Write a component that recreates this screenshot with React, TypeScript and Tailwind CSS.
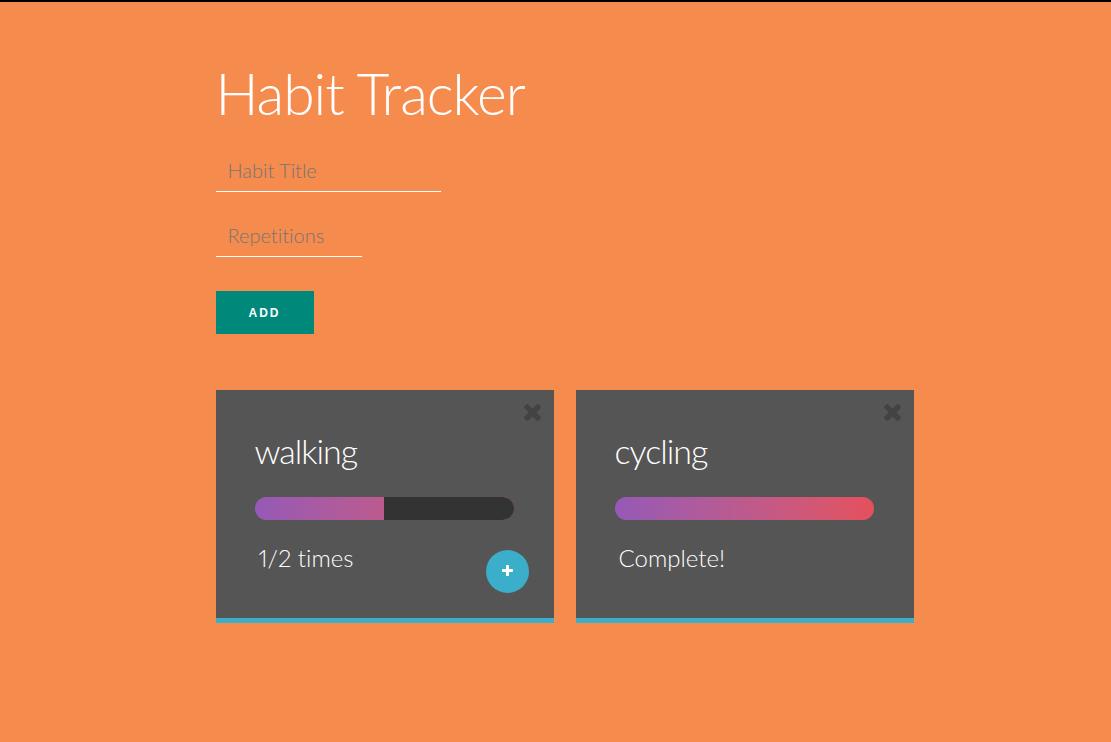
import React, { useState } from "react";

interface Habit {
    id: number;
    title: string;
    done: number;
    total: number;
}

const INITIAL_HABITS: Habit[] = [
    { id: 1, title: "walking", done: 1, total: 2 },
    { id: 2, title: "cycling", done: 3, total: 3 }
];

export default function App() {
    const [habits, setHabits] = useState<Habit[]>(INITIAL_HABITS);
    const [title, setTitle] = useState("");
    const [repetitions, setRepetitions] = useState("");

    const handleAdd = (e: React.FormEvent) => {
        e.preventDefault();
        const total = Number(repetitions);
        if (!title.trim() || !(total > 0)) return;
        setHabits([...habits, { id: Date.now(), title: title.trim(), done: 0, total }]);
        setTitle("");
        setRepetitions("");
    };

    const handleRemove = (id: number) => setHabits(habits.filter((habit) => habit.id !== id));

    const handleIncrement = (id: number) =>
        setHabits(habits.map((habit) => (habit.id === id ? { ...habit, done: habit.done + 1 } : habit)));

    return (
        <div className="min-h-screen border-t-2 border-black bg-[#f68b4e] font-['Lato',sans-serif] font-light text-white proportional-nums [font-variant-ligatures:none]">
            <main className="mx-auto w-full max-w-[720px] px-5 pt-14 pb-12">
                <h1 className="text-[57px] leading-[70px] tracking-[-1px]">Habit Tracker</h1>

                <form onSubmit={handleAdd} className="mt-5 flex flex-col items-start">
                    <input
                        type="text"
                        aria-label="Habit Title"
                        placeholder="Habit Title"
                        value={title}
                        onChange={(e) => setTitle(e.target.value)}
                        className="h-11 w-[225px] border-b border-white px-3 text-xl outline-none placeholder:text-[#757575]"
                    />
                    <input
                        type="text"
                        inputMode="numeric"
                        aria-label="Repetitions"
                        placeholder="Repetitions"
                        value={repetitions}
                        onChange={(e) => setRepetitions(e.target.value)}
                        className="mt-[21px] h-11 w-[146px] border-b border-white px-3 text-xl outline-none placeholder:text-[#757575]"
                    />
                    <button
                        type="submit"
                        className="mt-[34px] h-[43px] bg-[#00897b] px-[33px] font-['Liberation_Sans',sans-serif] text-xs font-bold tracking-[2px] uppercase"
                    >
                        Add
                    </button>
                </form>

                <ul className="mt-14 grid grid-cols-1 gap-[22px] sm:-mr-[18px] sm:grid-cols-2">
                    {habits.map((habit) => (
                        <HabitCard key={habit.id} habit={habit} onRemove={handleRemove} onIncrement={handleIncrement} />
                    ))}
                </ul>
            </main>
        </div>
    );
}

const HabitCard: React.FC<{
    habit: Habit;
    onRemove: (id: number) => void;
    onIncrement: (id: number) => void;
}> = ({ habit, onRemove, onIncrement }) => {
    const isComplete = habit.done >= habit.total;

    return (
        <li className="relative border-b-5 border-[#3baec9] bg-[#555] pt-[39px] pr-10 pb-11 pl-[39px]">
            <button
                aria-label={`Remove ${habit.title}`}
                onClick={() => onRemove(habit.id)}
                className="absolute top-3.5 right-[13px] text-[#434343]"
            >
                <TimesIcon />
            </button>
            <h2 className="text-[34px] leading-[44px] tracking-[-1px]">{habit.title}</h2>
            {/* The gradient spans the whole track, the dark part covers what is left to do */}
            <div className="mt-6 flex h-[23px] justify-end overflow-hidden rounded-full bg-linear-to-r from-[#9559b6] to-[#e5505c]">
                <div className="bg-[#333]" style={{ width: `${(1 - habit.done / habit.total) * 100}%` }} />
            </div>
            <p className="mt-[22px] pl-1 text-2xl leading-8">
                {isComplete ? "Complete!" : `${habit.done}/${habit.total} times`}
            </p>
            {!isComplete && (
                <button
                    aria-label={`Add one to ${habit.title}`}
                    onClick={() => onIncrement(habit.id)}
                    className="absolute right-[25px] bottom-[25px] flex size-[43px] items-center justify-center rounded-full bg-[#3baec9] pb-0.5"
                >
                    <PlusIcon />
                </button>
            )}
        </li>
    );
};

const TimesIcon = () => (
    <svg viewBox="110 366 1188 1188" fill="currentColor" className="size-[17px]" aria-hidden="true">
        <path d="M1298 1322q0 40-28 68l-136 136q-28 28-68 28t-68-28l-294-294-294 294q-28 28-68 28t-68-28l-136-136q-28-28-28-68t28-68l294-294-294-294q-28-28-28-68t28-68l136-136q28-28 68-28t68 28l294 294 294-294q28-28 68-28t68 28l136 136q28 28 28 68t-28 68l-294 294 294 294q28 28 28 68z" />
    </svg>
);

const PlusIcon = () => (
    <svg viewBox="192 128 1408 1408" fill="currentColor" className="size-[11px]" aria-hidden="true">
        <path d="M1600 736v192q0 40-28 68t-68 28h-416v416q0 40-28 68t-68 28h-192q-40 0-68-28t-28-68v-416h-416q-40 0-68-28t-28-68v-192q0-40 28-68t68-28h416v-416q0-40 28-68t68-28h192q40 0 68 28t28 68v416h416q40 0 68 28t28 68z" />
    </svg>
);
